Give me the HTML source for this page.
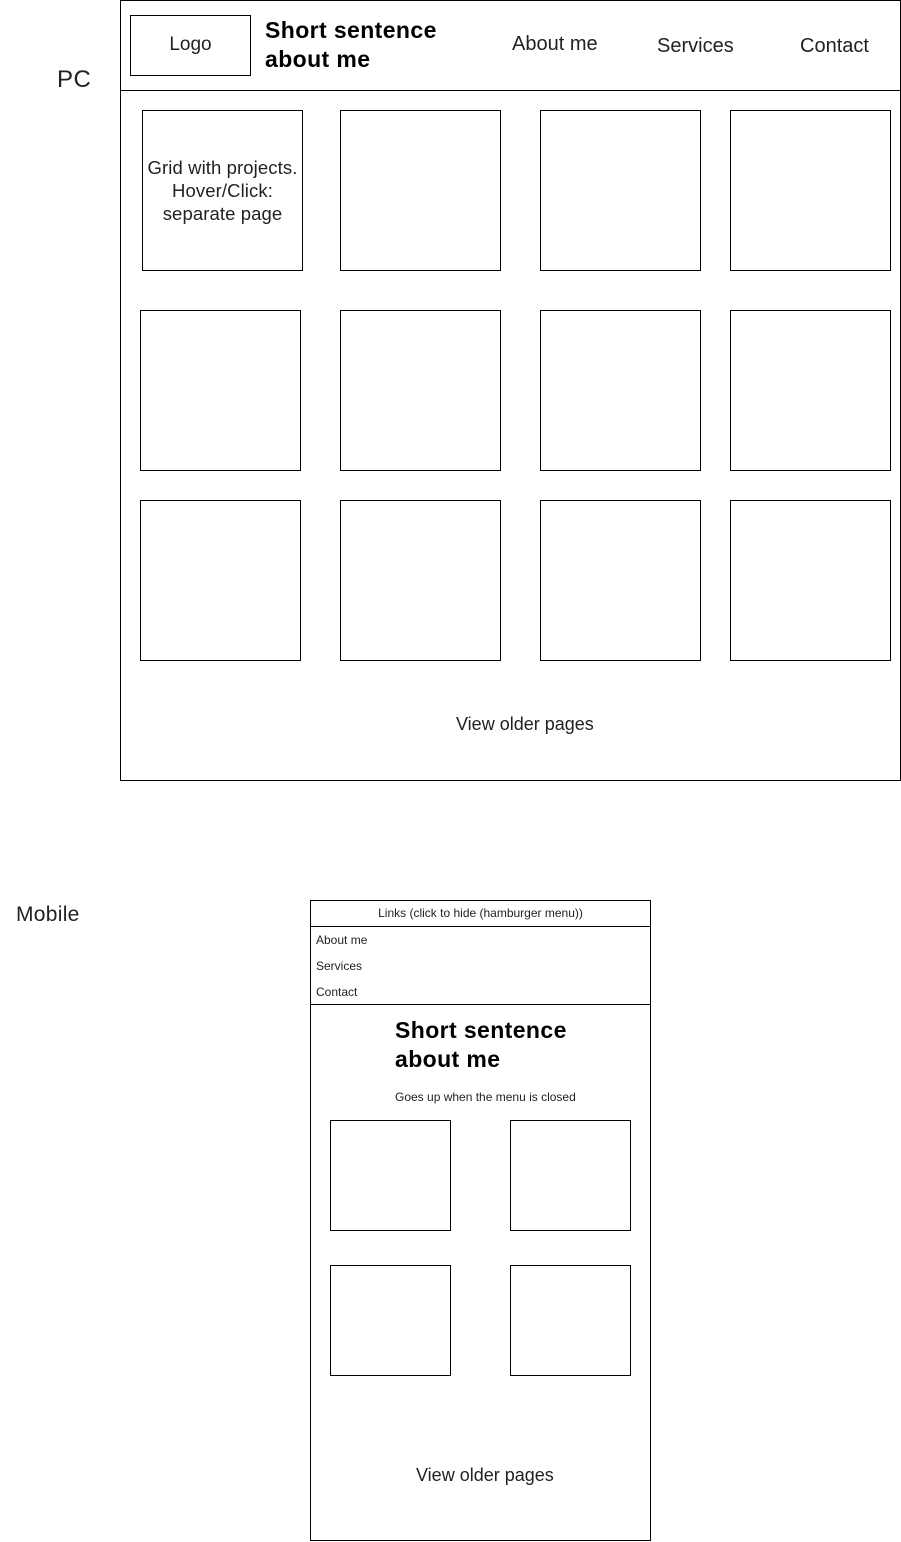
<!DOCTYPE html>
<html><head><meta charset="utf-8"><style>
html,body{margin:0;padding:0;background:#fff;width:901px;height:1542px;overflow:hidden;position:relative;font-family:"Liberation Sans",Arial,sans-serif;color:#222}
.b{position:absolute;border:1px solid #000;box-sizing:border-box}
.t{position:absolute;white-space:nowrap}
.h{position:absolute;height:1px;background:#000}
.sq{position:absolute;border:1px solid #000;box-sizing:border-box;width:161px;height:161px}
.ms{position:absolute;border:1px solid #000;box-sizing:border-box;width:121px;height:111px}
</style></head><body>
<div class="t" style="left:57px;top:66px;font-size:24px;letter-spacing:0.5px">PC</div>
<div class="b" style="left:120px;top:0;width:781px;height:781px"></div>
<div class="h" style="left:120px;top:90px;width:781px"></div>
<div class="b" style="left:130px;top:15px;width:121px;height:61px"></div>
<div class="t" style="left:130px;top:34px;width:121px;text-align:center;font-size:19px">Logo</div>
<div class="t" style="left:265px;top:16px;font-size:23px;font-weight:bold;line-height:29px;color:#000;letter-spacing:0.4px">Short sentence<br>about me</div>
<div class="t" style="left:512px;top:33px;font-size:20px">About me</div>
<div class="t" style="left:657px;top:35px;font-size:20px">Services</div>
<div class="t" style="left:800px;top:35px;font-size:20px">Contact</div>

<div class="sq" style="left:142px;top:110px"></div>
<div class="t" style="left:142px;top:156px;width:161px;text-align:center;font-size:18.5px;line-height:23px;white-space:normal;letter-spacing:0.1px">Grid with projects.<br>Hover/Click:<br>separate page</div>
<div class="sq" style="left:340px;top:110px"></div>
<div class="sq" style="left:540px;top:110px"></div>
<div class="sq" style="left:730px;top:110px"></div>
<div class="sq" style="left:140px;top:310px"></div>
<div class="sq" style="left:340px;top:310px"></div>
<div class="sq" style="left:540px;top:310px"></div>
<div class="sq" style="left:730px;top:310px"></div>
<div class="sq" style="left:140px;top:500px"></div>
<div class="sq" style="left:340px;top:500px"></div>
<div class="sq" style="left:540px;top:500px"></div>
<div class="sq" style="left:730px;top:500px"></div>
<div class="t" style="left:456px;top:714px;font-size:18px">View older pages</div>

<div class="t" style="left:16px;top:903px;font-size:21px;letter-spacing:0.3px">Mobile</div>
<div class="b" style="left:310px;top:900px;width:341px;height:641px"></div>
<div class="h" style="left:310px;top:926px;width:341px"></div>
<div class="h" style="left:310px;top:1004px;width:341px"></div>
<div class="t" style="left:310px;top:906px;width:341px;text-align:center;font-size:12px">Links (click to hide (hamburger menu))</div>
<div class="t" style="left:316px;top:933px;font-size:12px">About me</div>
<div class="t" style="left:316px;top:959px;font-size:12px">Services</div>
<div class="t" style="left:316px;top:985px;font-size:12px">Contact</div>
<div class="t" style="left:395px;top:1016px;font-size:23px;font-weight:bold;line-height:29px;color:#000;letter-spacing:0.4px">Short sentence<br>about me</div>
<div class="t" style="left:395px;top:1090px;font-size:12px">Goes up when the menu is closed</div>
<div class="ms" style="left:330px;top:1120px"></div>
<div class="ms" style="left:510px;top:1120px"></div>
<div class="ms" style="left:330px;top:1265px"></div>
<div class="ms" style="left:510px;top:1265px"></div>
<div class="t" style="left:416px;top:1465px;font-size:18px">View older pages</div>
</body></html>
